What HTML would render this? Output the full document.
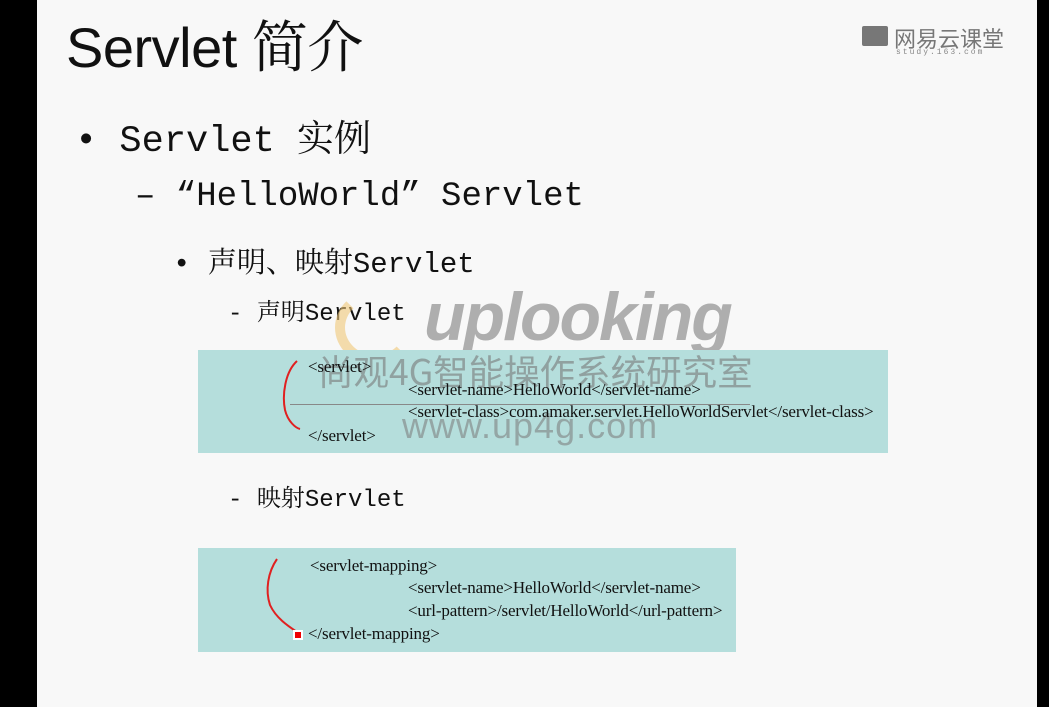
<!DOCTYPE html>
<html><head><meta charset="utf-8"><style>
body{margin:0;width:1049px;height:707px;background:#000;position:relative;overflow:hidden}
#s{position:absolute;left:37px;top:0;width:1000px;height:707px;background:#f8f8f8}
.t{position:absolute;white-space:nowrap;color:#111}
.m{font-family:"Liberation Mono","Noto Serif CJK SC",monospace}
.c{font-family:"Liberation Serif",serif;font-size:17px;letter-spacing:-0.15px;color:#111}
.box{position:absolute;background:#b5dedc}
</style></head><body>
<div id="s"></div>
<div class="t" style="left:66px;top:4px;font:56px 'Liberation Sans','Noto Sans CJK SC',sans-serif;letter-spacing:-0.5px">Servlet <span style="font-family:'Noto Serif CJK SC',serif">简介</span></div>
<div style="position:absolute;left:862px;top:26px;width:26px;height:20px;background:#777;border-radius:2px"></div>
<div class="t" style="left:894px;top:22px;font:22px 'Noto Sans CJK SC',sans-serif;color:#777">网易云课堂</div>
<div class="t" style="left:896px;top:48px;font:8px 'Liberation Mono',monospace;color:#888;letter-spacing:2px">study.163.com</div>
<div class="t m" style="left:75px;top:108px;font-size:37px">• Servlet <span style="font-family:'Noto Serif CJK SC',serif">实例</span></div>
<div class="t m" style="left:135px;top:178px;font-size:34px">– “HelloWorld” Servlet</div>
<div class="t m" style="left:173px;top:240px;font-size:29px">• <span style="font-family:'Noto Serif CJK SC',serif">声明、映射</span>Servlet</div>
<div class="t m" style="left:228px;top:292px;font-size:24px">- <span style="font-family:'Noto Serif CJK SC',serif">声明</span>Servlet</div>
<div class="t m" style="left:228px;top:478px;font-size:24px">- <span style="font-family:'Noto Serif CJK SC',serif">映射</span>Servlet</div>
<div class="t" style="left:424px;top:278px;font:italic bold 68px 'Liberation Sans',sans-serif;color:rgba(150,150,150,.75);letter-spacing:-2px">uplooking</div>
<div style="position:absolute;left:335px;top:290px;width:60px;height:55px;border:10px solid rgba(240,200,120,.6);border-radius:50%;border-top-color:transparent;border-right-color:transparent"></div>
<div class="box" style="left:198px;top:350px;width:690px;height:103px"></div>
<div class="box" style="left:198px;top:548px;width:538px;height:104px"></div>
<div class="t" style="left:318px;top:350px;font:35.5px 'Noto Sans CJK SC',sans-serif;color:rgba(120,120,120,.6);line-height:1.2">尚观4G智能操作系统研究室</div>
<div class="t" style="left:402px;top:405px;font:36px 'Liberation Sans',sans-serif;color:rgba(120,120,120,.55);letter-spacing:1px">www.up4g.com</div>
<div style="position:absolute;left:290px;top:404px;width:460px;height:1px;background:#888"></div>
<div class="t c" style="left:308px;top:357px">&lt;servlet&gt;</div>
<div class="t c" style="left:408px;top:380px">&lt;servlet-name&gt;HelloWorld&lt;/servlet-name&gt;</div>
<div class="t c" style="left:408px;top:402px">&lt;servlet-class&gt;com.amaker.servlet.HelloWorldServlet&lt;/servlet-class&gt;</div>
<div class="t c" style="left:308px;top:426px">&lt;/servlet&gt;</div>
<div class="t c" style="left:310px;top:556px">&lt;servlet-mapping&gt;</div>
<div class="t c" style="left:408px;top:578px">&lt;servlet-name&gt;HelloWorld&lt;/servlet-name&gt;</div>
<div class="t c" style="left:408px;top:601px">&lt;url-pattern&gt;/servlet/HelloWorld&lt;/url-pattern&gt;</div>
<div class="t c" style="left:308px;top:624px">&lt;/servlet-mapping&gt;</div>
<svg style="position:absolute;left:0;top:0" width="1049" height="707">
<path d="M297 361 C285 372 282 395 285 410 C288 422 296 428 300 429" stroke="#e02020" stroke-width="2" fill="none"/>
<path d="M277 559 C268 572 265 590 270 605 C276 618 288 626 297 632" stroke="#e02020" stroke-width="2" fill="none"/>
<rect x="293" y="630" width="10" height="10" fill="#fff"/><rect x="295" y="632" width="6" height="6" fill="#e00"/>
</svg>
</body></html>
